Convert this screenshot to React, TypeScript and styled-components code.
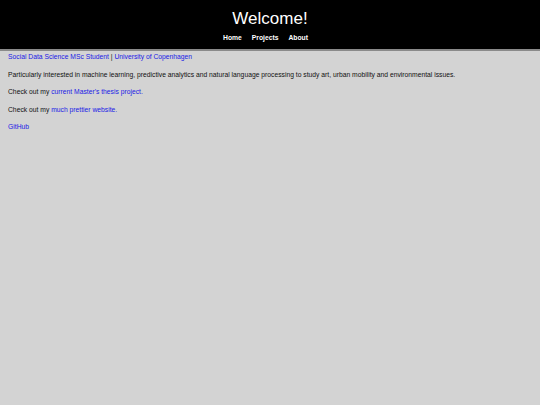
import React from "react";
import styled, { createGlobalStyle } from "styled-components";

const Global = createGlobalStyle`
  html, body { margin: 0; padding: 0; background: #d3d3d3; }
  body { font-family: "Liberation Sans", Arial, sans-serif; }
`;

const Header = styled.header`
  background: #000;
  border-bottom: 2px solid #8a8a8a;
  height: 49px;
  display: flex;
  flex-direction: column;
  align-items: center;
`;

const Title = styled.h1`
  margin: 9px 0 0;
  color: #fff;
  font-weight: normal;
  font-size: 17px;
  line-height: 20px;
`;

const Nav = styled.nav`
  display: flex;
  gap: 10px;
  margin-top: 5px;
  padding-right: 9px;
`;

const NavLink = styled.a`
  color: #fff;
  font-weight: bold;
  font-size: 6.75px;
  text-decoration: none;
  line-height: 8px;
`;

const Main = styled.main`
  padding: 2px 8px;
  font-size: 6.75px;
  color: #111;
`;

const P = styled.p`
  margin: 0 0 9.5px;
  line-height: 8px;
`;

const Link = styled.a`
  color: #1a1ae6;
  text-decoration: none;
`;

export default function App() {
  return (
    <>
      <Global />
      <Header>
        <Title>Welcome!</Title>
        <Nav>
          <NavLink href="#">Home</NavLink>
          <NavLink href="#">Projects</NavLink>
          <NavLink href="#">About</NavLink>
        </Nav>
      </Header>
      <Main>
        <P>
          <Link href="#">Social Data Science MSc Student</Link> | <Link href="#">University of Copenhagen</Link>
        </P>
        <P>
          Particularly interested in machine learning, predictive analytics and natural language processing to study art, urban mobility and environmental issues.
        </P>
        <P>
          Check out my <Link href="#">current Master's thesis project.</Link>
        </P>
        <P>
          Check out my <Link href="#">much prettier website.</Link>
        </P>
        <P>
          <Link href="#">GitHub</Link>
        </P>
      </Main>
    </>
  );
}
